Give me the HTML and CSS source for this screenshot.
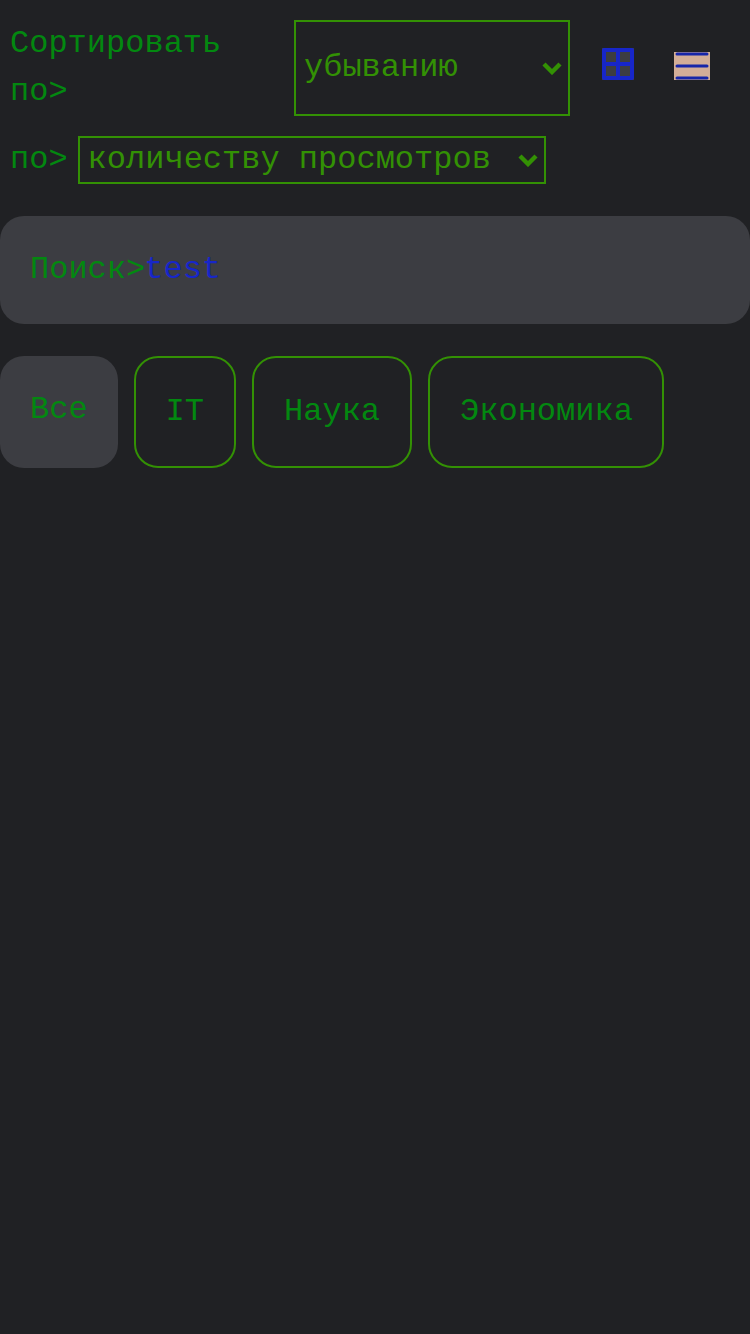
FILE: index.html
```html
<!DOCTYPE html>
<html lang="ru">
<head>
<meta charset="utf-8">
<title>Поиск</title>
<link rel="stylesheet" href="styles.css">
</head>
<body>
<header class="toolbar">
  <div class="sort-row">
    <span class="label label-wide">Сортировать по&gt;</span>
    <div class="select select-order">
      <span>убыванию</span>
      <svg class="chevron" width="20" height="14" viewBox="0 0 20 14"><path d="M2 3 L10 11 L18 3"/></svg>
    </div>
    <div class="views">
      <svg width="32" height="32" viewBox="0 0 32 32"><rect width="32" height="32" fill="#3c3d42"/><path d="M2 2H30V30H2ZM16 2V30M2 16H30" fill="none" stroke="#1726c9" stroke-width="4" stroke-linejoin="round"/></svg>
      <svg class="list-icon" width="36" height="28" viewBox="0 0 36 28"><rect width="36" height="28" fill="#d3ae98"/><path d="M3 2H33M3 14H33M3 26H33" stroke="#1726a9" stroke-width="3" stroke-linecap="round"/></svg>
    </div>
  </div>
  <div class="sort-row">
    <span class="label">по&gt;</span>
    <div class="select select-field">
      <span>количеству просмотров</span>
      <svg class="chevron" width="20" height="14" viewBox="0 0 20 14"><path d="M2 3 L10 11 L18 3"/></svg>
    </div>
  </div>
</header>
<div class="search"><span>Поиск&gt;</span><span class="query">test</span></div>
<nav class="tags">
  <div class="tag tag-active">Все</div>
  <div class="tag">IT</div>
  <div class="tag">Наука</div>
  <div class="tag tag-long">Экономика</div>
</nav>
</body>
</html>
```
FILE: styles.css
```css
* { box-sizing: border-box; }
body {
  margin: 0;
  min-height: 1334px;
  background: #202124;
  color: #038810;
  font: 32px/48px "Liberation Mono", monospace;
}
svg { display: block; flex: none; }
.toolbar {
  display: flex;
  flex-direction: column;
  gap: 20px;
  padding: 20px 10px 0;
}
.sort-row { display: flex; gap: 10px; }
.label-wide { width: 274px; }
.select {
  display: flex;
  align-items: center;
  justify-content: space-between;
  padding: 0 6px 0 8px;
  border: 2px solid #339104;
  color: #339104;
  white-space: nowrap;
}
.select span { margin: -2px 0; }
.select-order { width: 276px; }
.select-field { width: 468px; height: 48px; }
.chevron { fill: none; stroke: #339104; stroke-width: 4.4; }
.views {
  display: flex;
  align-items: flex-start;
  gap: 40px;
  padding: 28px 0 0 22px;
}
.list-icon { margin-top: 4px; }
.search {
  margin: 32px 0;
  padding: 30px;
  border-radius: 24px;
  background: #3c3d42;
}
.query { margin-left: -1px; color: #1726c9; }
.tags { display: flex; gap: 16px; }
.tag {
  padding: 30px;
  border: 2px solid #339104;
  border-radius: 24px;
}
.tag-long { width: 236px; }
.tag-active { border: 0; background: #3c3d42; }
```
